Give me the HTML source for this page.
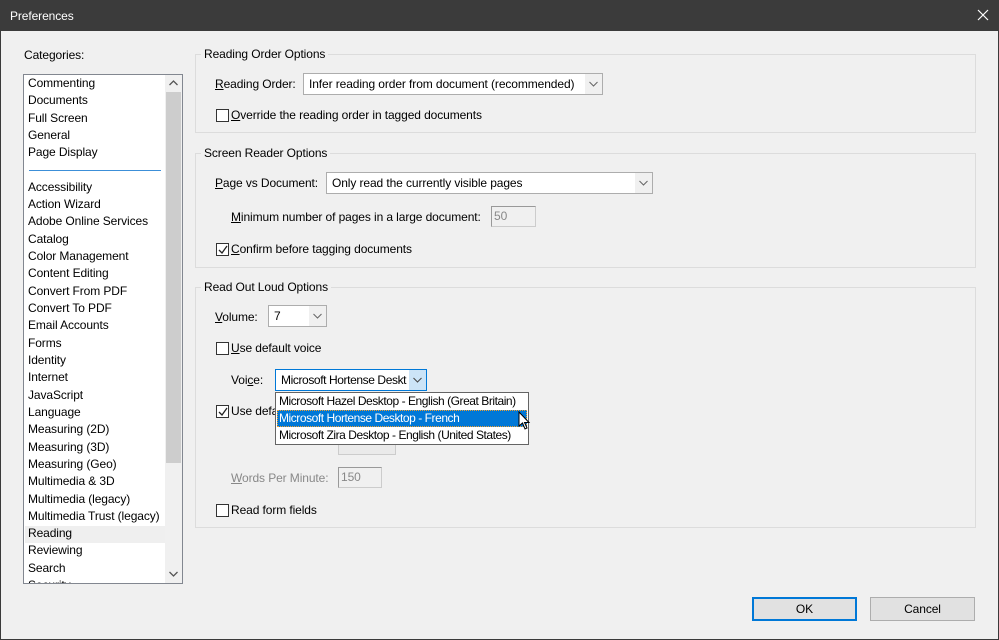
<!DOCTYPE html>
<html><head><meta charset="utf-8">
<style>
*{margin:0;padding:0;box-sizing:border-box}
body{width:999px;height:640px;overflow:hidden;background:#f0f0f0;font-family:"Liberation Sans",sans-serif;font-size:12px;color:#000;position:relative;letter-spacing:-0.1px}
.a{position:absolute;white-space:nowrap}
#win{position:absolute;left:0;top:0;width:999px;height:640px;border:1px solid #3a3a3a;border-top:none}
#title{position:absolute;left:0;top:0;width:999px;height:31px;background:#3b3b3b;color:#fff;font-size:12px;padding:9px 0 0 10px}
.list{position:absolute;left:23px;top:74px;width:160px;height:510px;background:#fff;border:1px solid #828790;overflow:hidden}
.li{position:absolute;left:4px;height:17px;line-height:17px}
.grp{position:absolute;border:1px solid #dcdcdc}
.gl{position:absolute;background:#f0f0f0;padding:0 3px;top:-9px;left:5px;line-height:16px}
.cb{position:absolute;width:13px;height:13px;border:1px solid #333;background:#fff}
.sel{position:absolute;background:#fff;border:1px solid #adadad;height:22px;line-height:20px;padding-left:5px}
.sel .ar{position:absolute;right:0;top:0;width:17px;height:20px;background:#f0f0f0}
.ar svg{position:absolute;left:4px;top:7px}
.inp{position:absolute;background:#f0f0f0;border:1px solid #ccc;border-left-color:#999;border-top-color:#999;height:21px;line-height:19px;padding-left:2px;color:#888}
.btn{position:absolute;height:24px;background:#e1e1e1;border:1px solid #adadad;text-align:center;line-height:22px}
u{text-decoration:underline}
.dis{color:#888}
.dd div{letter-spacing:-0.45px}
</style></head><body>
<div id="win"></div>
<div id="title">Preferences</div>
<svg class="a" style="left:977px;top:9px" width="12" height="12"><path d="M1 1L11 11M11 1L1 11" stroke="#fff" stroke-width="1.2"/></svg>

<div class="a" style="left:24px;top:48px">Cate<u>g</u>ories:</div>
<div class="list">
<div class="li" style="top:0">Commenting</div>
<div class="li" style="top:17px">Documents</div>
<div class="li" style="top:35px">Full Screen</div>
<div class="li" style="top:52px">General</div>
<div class="li" style="top:69px">Page Display</div>
<div class="a" style="left:5px;top:95px;width:132px;height:1px;background:#3c8fd8"></div>
<div class="li" style="top:104px">Accessibility</div>
<div class="li" style="top:121px">Action Wizard</div>
<div class="li" style="top:138px">Adobe Online Services</div>
<div class="li" style="top:156px">Catalog</div>
<div class="li" style="top:173px">Color Management</div>
<div class="li" style="top:190px">Content Editing</div>
<div class="li" style="top:208px">Convert From PDF</div>
<div class="li" style="top:225px">Convert To PDF</div>
<div class="li" style="top:242px">Email Accounts</div>
<div class="li" style="top:260px">Forms</div>
<div class="li" style="top:277px">Identity</div>
<div class="li" style="top:294px">Internet</div>
<div class="li" style="top:312px">JavaScript</div>
<div class="li" style="top:329px">Language</div>
<div class="li" style="top:346px">Measuring (2D)</div>
<div class="li" style="top:364px">Measuring (3D)</div>
<div class="li" style="top:381px">Measuring (Geo)</div>
<div class="li" style="top:398px">Multimedia &amp; 3D</div>
<div class="li" style="top:416px">Multimedia (legacy)</div>
<div class="li" style="top:433px">Multimedia Trust (legacy)</div>
<div class="a" style="left:1px;top:451px;width:140px;height:17px;background:#efefef"></div>
<div class="li" style="top:450px">Reading</div>
<div class="li" style="top:467px">Reviewing</div>
<div class="li" style="top:485px">Search</div>
<div class="li" style="top:502px">Security</div>
<div class="a" style="left:141px;top:0;width:17px;height:508px;background:#f0f0f0"></div>
<div class="a" style="left:142px;top:17px;width:15px;height:371px;background:#cdcdcd"></div>
<svg class="a" style="left:145px;top:5px" width="9" height="6"><path d="M0.5 5L4.5 1L8.5 5" stroke="#555" fill="none" stroke-width="1.3"/></svg>
<svg class="a" style="left:145px;top:496px" width="9" height="6"><path d="M0.5 1L4.5 5L8.5 1" stroke="#555" fill="none" stroke-width="1.3"/></svg>
</div>

<div class="grp" style="left:195px;top:54px;width:781px;height:79px"><div class="gl">Reading Order Options</div></div>
<div class="a" style="left:215px;top:77px"><u>R</u>eading Order:</div>
<div class="sel" style="left:303px;top:73px;width:300px">Infer reading order from document (recommended)<div class="ar"><svg width="9" height="6"><path d="M0.5 1L4.5 5L8.5 1" stroke="#666" fill="none"/></svg></div></div>
<div class="cb" style="left:216px;top:109px"></div>
<div class="a" style="left:231px;top:108px"><u>O</u>verride the reading order in tagged documents</div>

<div class="grp" style="left:195px;top:153px;width:781px;height:115px"><div class="gl">Screen Reader Options</div></div>
<div class="a" style="left:215px;top:176px"><u>P</u>age vs Document:</div>
<div class="sel" style="left:326px;top:172px;width:327px">Only read the currently visible pages<div class="ar"><svg width="9" height="6"><path d="M0.5 1L4.5 5L8.5 1" stroke="#666" fill="none"/></svg></div></div>
<div class="a" style="left:231px;top:210px"><u>M</u>inimum number of pages in a large document:</div>
<div class="inp" style="left:491px;top:206px;width:45px">50</div>
<div class="cb" style="left:216px;top:243px"></div>
<svg class="a" style="left:218px;top:245px" width="10" height="10"><path d="M1 5L4 8L9 1" stroke="#222" fill="none" stroke-width="1.3"/></svg>
<div class="a" style="left:231px;top:242px"><u>C</u>onfirm before tagging documents</div>

<div class="grp" style="left:195px;top:287px;width:781px;height:241px"><div class="gl">Read Out Loud Options</div></div>
<div class="a" style="left:215px;top:310px"><u>V</u>olume:</div>
<div class="sel" style="left:268px;top:305px;width:59px">7<div class="ar"><svg width="9" height="6"><path d="M0.5 1L4.5 5L8.5 1" stroke="#666" fill="none"/></svg></div></div>
<div class="cb" style="left:216px;top:342px"></div>
<div class="a" style="left:231px;top:341px"><u>U</u>se default voice</div>
<div class="a" style="left:231px;top:373px">Voi<u>c</u>e:</div>
<div class="a" style="left:275px;top:369px;width:152px;height:22px;background:#fff;border:1px solid #0078d7;line-height:20px;padding-left:5px;overflow:hidden;letter-spacing:-0.4px">Microsoft Hortense Deskt<div class="a" style="right:0;top:0;width:17px;height:20px;background:#cce4f7"><svg class="a" style="left:4px;top:7px" width="9" height="6"><path d="M0.5 1L4.5 5L8.5 1" stroke="#444" fill="none"/></svg></div></div>
<div class="cb" style="left:216px;top:405px"></div>
<svg class="a" style="left:218px;top:407px" width="10" height="10"><path d="M1 5L4 8L9 1" stroke="#222" fill="none" stroke-width="1.3"/></svg>
<div class="a" style="left:231px;top:404px">Use defa</div>
<div class="a dis" style="left:231px;top:471px"><u>W</u>ords Per Minute:</div>
<div class="inp" style="left:338px;top:467px;width:44px">150</div>
<div class="a" style="left:338px;top:435px;width:58px;height:20px;border:1px solid #ccc;background:#eaeaea"></div>
<div class="cb" style="left:216px;top:504px"></div>
<div class="a" style="left:231px;top:503px">Read form fields</div>

<div class="a dd" style="left:275px;top:392px;width:254px;height:53px;background:#fff;border:1px solid #646464">
<div class="a" style="left:3px;top:0;line-height:17px">Microsoft Hazel Desktop - English (Great Britain)</div>
<div class="a" style="left:1px;top:17px;width:250px;height:17px;background:#0078d7;border:1px dotted #f0a030"></div>
<div class="a" style="left:3px;top:17px;line-height:17px;color:#fff">Microsoft Hortense Desktop - French</div>
<div class="a" style="left:3px;top:34px;line-height:17px">Microsoft Zira Desktop - English (United States)</div>
</div>
<svg class="a" style="left:518px;top:411px" width="14" height="20"><path d="M1 1L1 15L4.5 12L7 18L9 17L6.5 11.5L11 11.5Z" fill="#fff" stroke="#000" stroke-width="1"/></svg>

<div class="btn" style="left:752px;top:597px;width:105px;border:2px solid #0078d7;line-height:20px">OK</div>
<div class="btn" style="left:870px;top:597px;width:105px">Cancel</div>
</body></html>
